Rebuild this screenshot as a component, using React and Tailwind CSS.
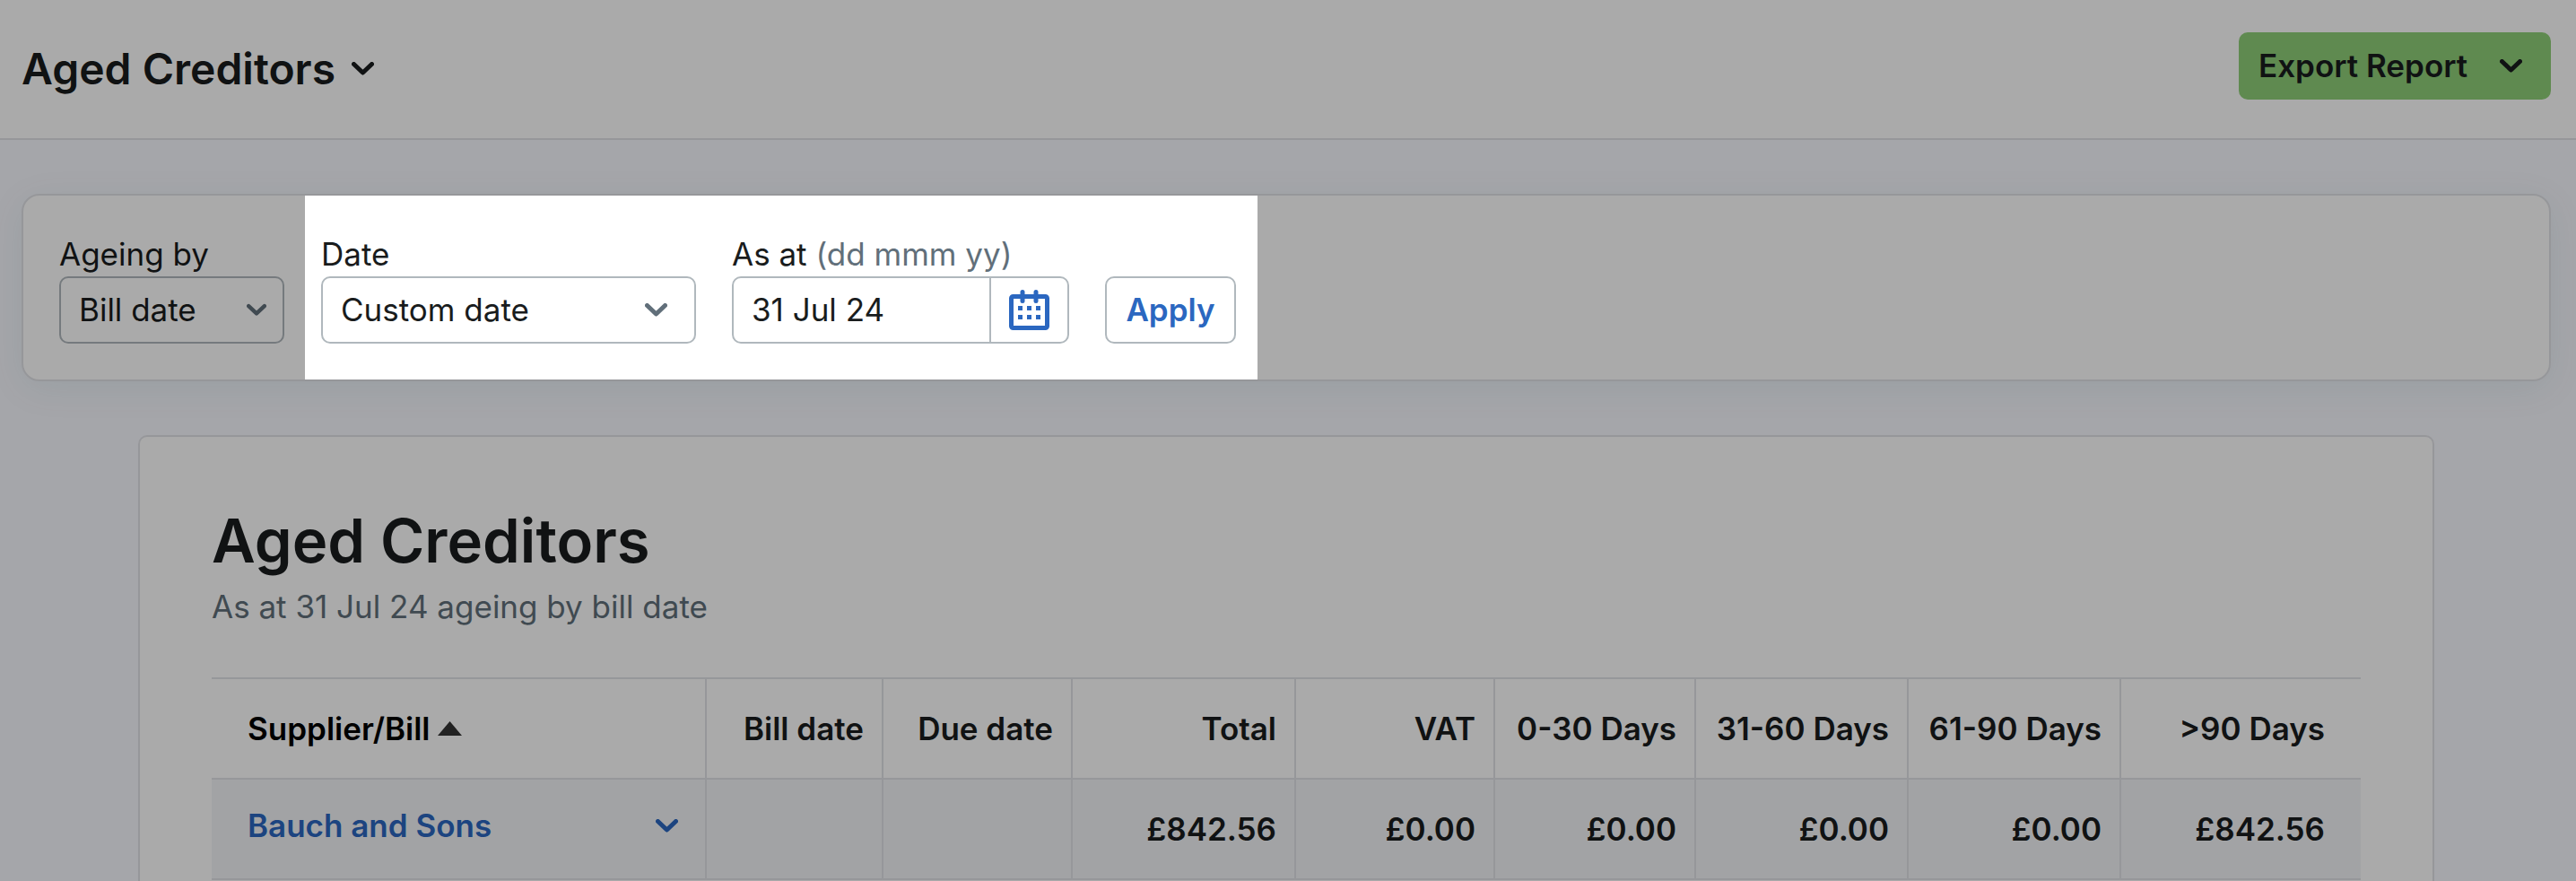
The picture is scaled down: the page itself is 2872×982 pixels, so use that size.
import React, { useState } from 'react';

const columns = [
  { label: 'Bill date', width: 'w-[197px]' },
  { label: 'Due date', width: 'w-[211px]' },
  { label: 'Total', width: 'w-[249px]' },
  { label: 'VAT', width: 'w-[222px]' },
  { label: '0-30 Days', width: 'w-[224px]' },
  { label: '31-60 Days', width: 'w-[237px]' },
  { label: '61-90 Days', width: 'w-[237px]' },
  { label: '>90 Days', width: 'w-[267px]' },
];

const suppliers = [
  { name: 'Bauch and Sons', values: ['', '', '£842.56', '£0.00', '£0.00', '£0.00', '£0.00', '£842.56'] },
];

function Chevron({ className }) {
  return (
    <svg className={`h-[15px] ${className}`} viewBox="0 0 25 15" fill="none" stroke="currentColor" strokeWidth="5" strokeLinecap="round" strokeLinejoin="round" aria-hidden="true">
      <path d="M2.5 2.5L12.5 12L22.5 2.5" />
    </svg>
  );
}

function CalendarIcon() {
  return (
    <svg className="w-[45px] h-[45px]" viewBox="0 0 45 45" aria-hidden="true">
      <rect x="2.5" y="7.5" width="40" height="35" rx="2" fill="none" stroke="currentColor" strokeWidth="5" />
      <path d="M15 2.5V12.5M30 2.5V12.5" fill="none" stroke="currentColor" strokeWidth="5" strokeLinecap="round" />
      <path d="M10 18h5v5h-5zM20 18h5v5h-5zM30 18h5v5h-5zM10 28h5v5h-5zM20 28h5v5h-5zM30 28h5v5h-5z" fill="currentColor" />
    </svg>
  );
}

function SelectField({ id, label, value, options, onChange, className, chevronClass }) {
  return (
    <div className={className}>
      <label htmlFor={id} className="block leading-[50px]">{label}</label>
      <div className="relative">
        <select
          id={id}
          value={value}
          onChange={e => onChange(e.target.value)}
          className="appearance-none block w-full h-[75px] px-5 rounded-[10px] border-2 border-[#b0b8bd] bg-transparent"
        >
          {options.map(o => <option key={o}>{o}</option>)}
        </select>
        <Chevron className={`absolute top-[30px] text-[#616f7a] pointer-events-none ${chevronClass}`} />
      </div>
    </div>
  );
}

export default function App() {
  const [ageingBy, setAgeingBy] = useState('Bill date');
  const [dateRange, setDateRange] = useState('Custom date');
  const [asAt, setAsAt] = useState('31 Jul 24');

  return (
    <div className="min-h-screen flex flex-col overflow-hidden bg-[#f8f9ff] text-[#191c1d] text-[35px] font-['Inter',sans-serif] antialiased">
      <header className="flex items-start justify-between pt-9 pb-[37px] pl-6 pr-7 bg-white border-b-2 border-[#e2e3e8]">
        <button className="flex items-center gap-[18px] h-[81px] text-[48px] font-semibold">
          Aged Creditors
          <Chevron className="w-[25px]" />
        </button>
        <button className="flex items-center justify-between w-[348px] h-[75px] pl-[22px] pr-8 rounded-[10px] bg-[#8fcf78] font-semibold">
          Export Report
          <Chevron className="w-[25px]" />
        </button>
      </header>

      <main className="flex-1 flex flex-col pt-15 pl-6 pr-7">
        <form
          onSubmit={e => e.preventDefault()}
          className="flex pl-10 bg-white border-2 border-[#e2e3e8] rounded-[20px] shadow-[0_8px_40px_rgba(0,110,120,0.08)]"
        >
          <SelectField
            id="ageing-by"
            label="Ageing by"
            value={ageingBy}
            options={['Bill date', 'Due date']}
            onChange={setAgeingBy}
            className="w-[251px] py-10 mr-[23px]"
            chevronClass="right-5 w-[22px]"
          />

          {/* Highlighted fields, everything around them is dimmed by the spread shadow */}
          <div className="relative z-10 flex items-end gap-10 py-10 pl-[18px] pr-6 bg-white shadow-[0_0_0_4000px_rgba(0,0,0,0.333)]">
            <SelectField
              id="date-range"
              label="Date"
              value={dateRange}
              options={['Custom date', 'Today', 'End of last month']}
              onChange={setDateRange}
              className="w-[418px]"
              chevronClass="right-8 w-[25px]"
            />
            <div className="w-[376px]">
              <label htmlFor="as-at" className="block leading-[50px] whitespace-nowrap">
                As at <span className="text-[#616f7a]">(dd mmm yy)</span>
              </label>
              <div className="flex h-[75px] rounded-[10px] border-2 border-[#b0b8bd]">
                <input
                  id="as-at"
                  type="text"
                  value={asAt}
                  onChange={e => setAsAt(e.target.value)}
                  className="flex-1 min-w-0 px-5"
                />
                <button type="button" aria-label="Open calendar" className="flex items-center justify-center w-[87px] border-l-2 border-[#b0b8bd] text-[#2b67c0]">
                  <CalendarIcon />
                </button>
              </div>
            </div>
            <button type="submit" className="w-[146px] h-[75px] rounded-[10px] border-2 border-[#b0b8bd] text-[#2b67c0] font-semibold">
              Apply
            </button>
          </div>
        </form>

        <section className="flex-1 w-full max-w-[2560px] mx-auto mt-15 px-20 pt-[74px] bg-white border-2 border-b-0 border-[#e2e3e8] rounded-t-[10px]">
          <h1 className="text-[67px] leading-[84px] font-semibold">Aged Creditors</h1>
          <p className="leading-[62px] text-[#616f7a]">As at 31 Jul 24 ageing by bill date</p>

          <table className="w-full mt-12 table-fixed border-separate border-spacing-0 font-semibold whitespace-nowrap">
            <thead>
              <tr>
                <th scope="col" className="w-[552px] h-[114px] pl-10 text-left font-semibold text-black border-y-2 border-r-2 border-[#e2e3e8]">
                  <div className="flex items-center gap-2">
                    Supplier/Bill
                    <svg className="w-[27px] h-4" viewBox="0 0 27 16" fill="#333333" aria-hidden="true"><path d="M13.5 0L27 16H0z" /></svg>
                  </div>
                </th>
                {columns.map(col => (
                  <th
                    key={col.label}
                    scope="col"
                    className={`${col.width} pr-5 text-right font-semibold border-y-2 border-r-2 border-[#e2e3e8] last:border-r-0 last:pr-10`}
                  >
                    {col.label}
                  </th>
                ))}
              </tr>
            </thead>
            <tbody>
              {suppliers.map(supplier => (
                <tr key={supplier.name} className="bg-[#f3f5f8]">
                  <td className="h-[112px] pl-10 pr-[30px] pb-2 border-b-2 border-r-2 border-[#e2e3e8]">
                    <div className="flex items-center justify-between text-[#2b67c0]">
                      <a href="#supplier">{supplier.name}</a>
                      <Chevron className="w-[25px]" />
                    </div>
                  </td>
                  {supplier.values.map((value, i) => (
                    <td key={i} className="pr-5 text-right border-b-2 border-r-2 border-[#e2e3e8] last:border-r-0 last:pr-10">
                      {value}
                    </td>
                  ))}
                </tr>
              ))}
            </tbody>
          </table>
        </section>
      </main>
    </div>
  );
}
